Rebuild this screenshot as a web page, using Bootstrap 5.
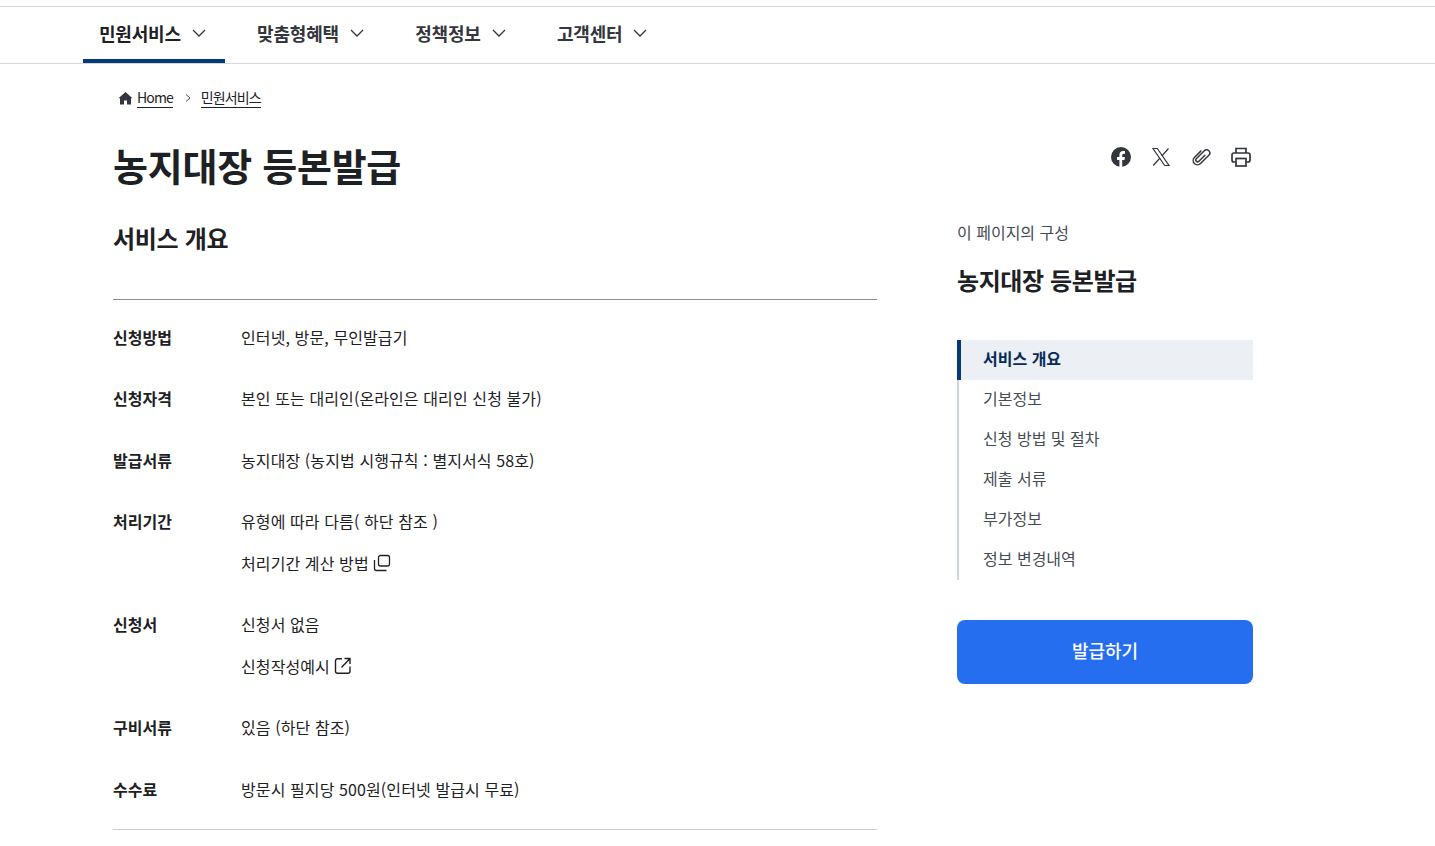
<!DOCTYPE html>
<html lang="ko"><head><meta charset="utf-8"><title>농지대장 등본발급</title>
<link rel="stylesheet" href="https://cdn.jsdelivr.net/npm/bootstrap@5.3.0/dist/css/bootstrap.min.css">
<style>
body{font-family:"Noto Sans CJK KR","Noto Sans",sans-serif;color:#1e2124;font-size:16px;overflow:hidden;height:846px}
a{color:inherit;text-decoration:none}
.top-gnb{margin-top:6px;border-top:1px solid #d6d6dc;border-bottom:1px solid #d6d6dc;height:58px;padding-left:83px;gap:16px}
.gnb-item{height:56px;padding:0 19.3px 0 16px;font-size:18px;font-weight:700;color:#33363d;letter-spacing:-.2px;gap:11px;border-bottom:4px solid transparent}
.gnb-item.on{color:#1e2124;border-bottom-color:#063a74}
.page-wrap{padding-left:113px;width:1253px}
.crumbs{padding:23px 0 0 5px;height:52px;font-size:14px;letter-spacing:-.9px;gap:10px}
.crumb-sep{margin-left:1px;margin-right:-1px}
.crumbs a{border-bottom:1px solid #1e2124;line-height:20px;height:21px}
.title-row{height:82px}
.page-title{font-size:38px;font-weight:700;line-height:60px;margin:19px 0 0;letter-spacing:-.25px}
.share-box{gap:20px;padding-top:31px;margin-right:2px}
.main-col{width:764px}
.side-col{width:296px}
.sec-title{font-size:24px;font-weight:700;line-height:36px;margin:22px 0 0;padding:0 0 42px;border-bottom:1px solid #8a8d92;letter-spacing:-.3px;box-sizing:border-box;height:80px}
.info-list{border-bottom:1px solid #cdd1d5;padding-bottom:26.5px;margin:0}
.info-row{margin-top:33.3px;line-height:28px;min-height:28px;letter-spacing:.1px}
.info-row:first-child{margin-top:23px}
.info-row dt{width:128px;flex:none;font-weight:700;font-size:16px;letter-spacing:0;margin:0}
.info-row dd{margin:0;font-weight:400}
.info-row dd p{margin:0}
.info-row dd p+p{margin-top:14px}
.toc-cap{font-size:16px;color:#464c53;line-height:24px;margin-top:22px}
.toc-title{font-size:24px;font-weight:700;line-height:36px;margin:18px 0 42px;letter-spacing:-.4px}
.toc-list{border-left:2px solid #cdd6e3}
.toc-list a{display:block;height:40px;line-height:36px;padding-left:24px;color:#464c53;margin-left:-2px;border-left:2px solid transparent}
.toc-list a.on{background:#eceff4;color:#052b57;font-weight:700;border-left:4px solid #063a74;padding-left:22px}
.go-btn{margin-top:40px;height:64px;width:296px;background:#256ef0;border:0;border-radius:8px;color:#fff;font-size:18px;font-weight:500;padding-bottom:10px}
.go-btn:hover{background:#256ef0;color:#fff}
</style></head><body>
<nav class="top-gnb d-flex">
 <a href="#" class="gnb-item on d-flex align-items-center"><span>민원서비스</span><svg width="14" height="8" viewBox="0 0 14 8" fill="none" stroke="#33363d" stroke-width="1.3"><path d="M1 1l6 6 6-6"/></svg></a>
 <a href="#" class="gnb-item d-flex align-items-center"><span>맞춤형혜택</span><svg width="14" height="8" viewBox="0 0 14 8" fill="none" stroke="#33363d" stroke-width="1.3"><path d="M1 1l6 6 6-6"/></svg></a>
 <a href="#" class="gnb-item d-flex align-items-center"><span>정책정보</span><svg width="14" height="8" viewBox="0 0 14 8" fill="none" stroke="#33363d" stroke-width="1.3"><path d="M1 1l6 6 6-6"/></svg></a>
 <a href="#" class="gnb-item d-flex align-items-center"><span>고객센터</span><svg width="14" height="8" viewBox="0 0 14 8" fill="none" stroke="#33363d" stroke-width="1.3"><path d="M1 1l6 6 6-6"/></svg></a>
</nav>
<div class="page-wrap">
 <div class="crumbs d-flex align-items-start">
  <div class="d-flex align-items-start gap-1"><svg class="mt-1" width="15" height="14" viewBox="0 0 15 14" fill="#33363d"><path d="M7.500 1L.5 7.300H2V13.500h4V9.500h3v4h4V7.300h1.500z"/></svg><a href="#">Home</a></div>
  <svg class="mt-1 crumb-sep" width="8" height="14" viewBox="0 0 8 14" fill="none" stroke="#464c53"><path d="M2 3.500l4 3.500-4 3.500"/></svg>
  <a href="#">민원서비스</a>
 </div>
 <div class="title-row d-flex justify-content-between align-items-start">
  <h1 class="page-title">농지대장 등본발급</h1>
  <div class="share-box d-flex">
   <svg width="20" height="20" viewBox="0 0 20 20"><circle cx="10" cy="10" r="10" fill="#33363d"/><path fill="#fff" d="M8.400 20v-7H6v-3h2.400V8c0-2.500 1.500-3.900 3.700-3.900 1 0 1.900.2 1.900.2v2.500h-1.200c-1.200 0-1.600.8-1.600 1.500V10h2.700l-.4 3h-2.300v7z"/></svg>
   <svg width="20" height="20" viewBox="0 0 20 20" fill="none" stroke="#33363d" stroke-width="1.200"><path d="M2 1.500h4.300l11.700 17h-4.300z"/><path d="M17.500 1.500l-6.700 7.500M9 11l-6.800 7.500"/></svg>
   <svg width="20" height="20" viewBox="0 0 20 20" fill="none" stroke="#33363d" stroke-width="1.500" stroke-linecap="round"><g transform="rotate(45 10 10)"><path d="M11.500 6v8.500a1.800 1.800 0 0 1-3.600 0V3.200a3.200 3.200 0 0 1 6.400 0v11.800a4.300 4.300 0 0 1-8.600 0V6"/></g></svg>
   <svg width="20" height="20" viewBox="0 0 20 20" fill="none" stroke="#33363d" stroke-width="1.700"><path d="M5 6V1.500h10V6"/><rect x="1" y="6" width="18" height="9" rx="2"/><rect x="5" y="11.500" width="10" height="7.500" fill="#fff"/></svg>
  </div>
 </div>
 <div class="d-flex justify-content-between">
  <main class="main-col">
   <h2 class="sec-title">서비스 개요</h2>
   <dl class="info-list">
    <div class="info-row d-flex"><dt>신청방법</dt><dd>인터넷, 방문, 무인발급기</dd></div>
    <div class="info-row d-flex"><dt>신청자격</dt><dd>본인 또는 대리인(온라인은 대리인 신청 불가)</dd></div>
    <div class="info-row d-flex"><dt>발급서류</dt><dd>농지대장 (농지법 시행규칙 : 별지서식 58호)</dd></div>
    <div class="info-row d-flex"><dt>처리기간</dt><dd><p>유형에 따라 다름( 하단 참조 )</p><p class="d-flex align-items-center gap-1">처리기간 계산 방법 <svg width="18" height="18" viewBox="0 0 18 18" fill="none" stroke="#1e2124" stroke-width="1.300"><rect x="5.500" y="1.500" width="11" height="10.500" rx="2"/><path d="M1.500 6v8.500c0 1 .8 2 2 2h10"/></svg></p></dd></div>
    <div class="info-row d-flex"><dt>신청서</dt><dd><p>신청서 없음</p><p class="d-flex align-items-center gap-1">신청작성예시 <svg width="18" height="18" viewBox="0 0 18 18" fill="none" stroke="#1e2124" stroke-width="1.400"><path d="M8 1.800H3.500a2 2 0 0 0-2 2v10.500a2 2 0 0 0 2 2h10.500a2 2 0 0 0 2-2V9.500"/><path d="M7.500 10.500L15.500 2M10.500 1.500h5.500V7"/></svg></p></dd></div>
    <div class="info-row d-flex"><dt>구비서류</dt><dd>있음 (하단 참조)</dd></div>
    <div class="info-row d-flex"><dt>수수료</dt><dd>방문시 필지당 500원(인터넷 발급시 무료)</dd></div>
   </dl>
  </main>
  <aside class="side-col">
   <div class="toc-cap">이 페이지의 구성</div>
   <div class="toc-title">농지대장 등본발급</div>
   <div class="toc-list">
    <a href="#" class="on">서비스 개요</a><a href="#">기본정보</a><a href="#">신청 방법 및 절차</a><a href="#">제출 서류</a><a href="#">부가정보</a><a href="#">정보 변경내역</a>
   </div>
   <button class="btn go-btn">발급하기</button>
  </aside>
 </div>
</div>
</body></html>
